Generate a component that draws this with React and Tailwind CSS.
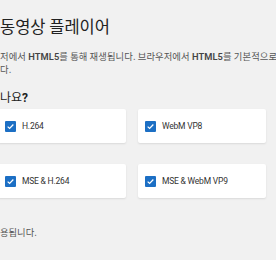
export default function App() {
  const codecs = ["H.264", "WebM VP8", "MSE & H.264", "MSE & WebM VP9"];
  return (
    <div className="h-[260px] w-[276px] overflow-hidden bg-[#f1f1f1] font-['Roboto','Noto_Sans_CJK_KR',sans-serif] text-[#333]">
      <div className="pt-[16px]">
        <h1 className="whitespace-nowrap text-[16.5px] leading-[20px] font-normal text-[#222] font-['Noto_Sans_CJK_KR',sans-serif]">
          동영상 플레이어
        </h1>
        <p className="mt-[14px] whitespace-nowrap text-[9.3px] tracking-[0.1px] leading-[13px] text-[#555] font-['Noto_Sans_CJK_KR',sans-serif]">
          저에서 <b className="font-semibold font-['Roboto',sans-serif] text-[#444]">HTML5</b>를 통해 재생됩니다. 브라우저에서{" "}
          <b className="font-semibold font-['Roboto',sans-serif] text-[#444]">HTML5</b>를 기본적으로
          <br />
          다.
        </p>
        <h2 className="mt-[13px] text-[12px] leading-[16px] font-normal text-[#222] font-['Noto_Sans_CJK_KR',sans-serif]">
          나요<b className="font-bold font-['Roboto',sans-serif]">?</b>
        </h2>
        <div className="-ml-[2px] mt-[3px] grid grid-cols-[128px_128px] gap-x-[12px] gap-y-[21px]">
          {codecs.map((c) => (
            <div
              key={c}
              className="flex h-[34px] items-center gap-[6px] rounded-[2px] bg-white pl-[7px] shadow-[0_1px_2px_rgba(0,0,0,0.1)]"
            >
              <span className="flex h-[11px] w-[11px] items-center justify-center rounded-[1px] bg-[#1c6fc4]">
                <svg viewBox="0 0 12 12" className="h-[9px] w-[9px]">
                  <path d="M2.2 6.2 L4.8 8.6 L9.8 3.4" fill="none" stroke="white" strokeWidth="1.7" />
                </svg>
              </span>
              <span className="text-[8.5px] tracking-[-0.2px] text-[#333]">{c}</span>
            </div>
          ))}
        </div>
        <p className="mt-[28px] text-[9.3px] leading-[13px] text-[#555] font-['Noto_Sans_CJK_KR',sans-serif]">
          용됩니다.
        </p>
      </div>
    </div>
  );
}
